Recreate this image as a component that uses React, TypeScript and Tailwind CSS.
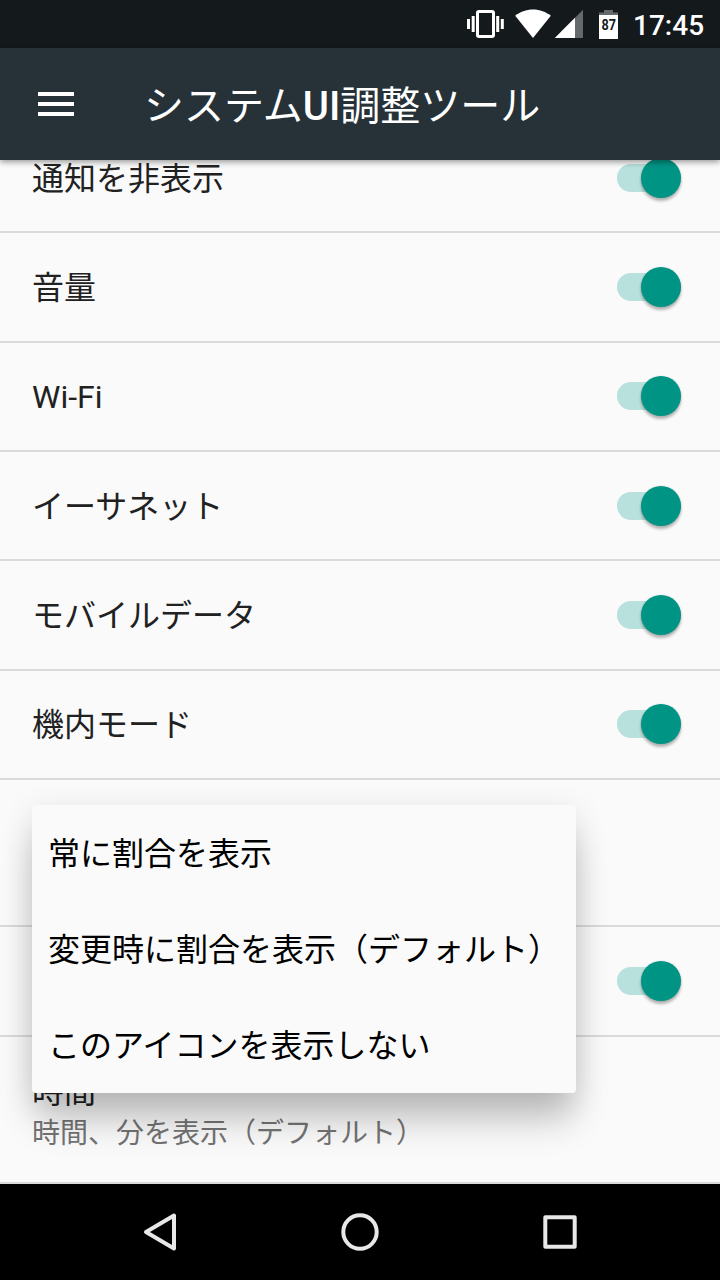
const jp = "font-[Roboto,'Noto_Sans_CJK_JP',sans-serif]";

function Toggle() {
  return (
    <div className="mr-[39px] grid h-10 w-16 shrink-0 items-center">
      <div className="col-start-1 row-start-1 h-7 w-16 rounded-full bg-[#b8e0dc]" />
      <div className="z-[1] col-start-1 row-start-1 h-10 w-10 justify-self-end rounded-full bg-[#009485] shadow-[0_3px_3px_rgba(0,0,0,0.28),0_0_2px_rgba(0,0,0,0.15)]" />
    </div>
  );
}

function SwitchRow({ label }: { label: string }) {
  return (
    <div className="flex h-[109.333px] shrink-0 items-center justify-between border-b-2 border-[#dadada] pl-8">
      <span className="pt-[2px] text-[32px] leading-[44px] text-[#212121]">{label}</span>
      <Toggle />
    </div>
  );
}

const labels = ["通知を非表示", "音量", "Wi-Fi", "イーサネット", "モバイルデータ", "機内モード"];
const options = ["常に割合を表示", "変更時に割合を表示（デフォルト）", "このアイコンを表示しない"];

function StatusBar() {
  return (
    <div className="flex h-12 shrink-0 items-center justify-end bg-[#14191c] pr-4">
      <svg width="162" height="48" viewBox="460 0 162 48" fill="#fff">
        <rect x="477.5" y="11.5" width="16" height="25" rx="1.5" fill="none" stroke="#fff" strokeWidth="3" />
        <rect x="467" y="19" width="3" height="10" />
        <rect x="471.7" y="16" width="3" height="16" />
        <rect x="496.2" y="16" width="3" height="16" />
        <rect x="500.8" y="19" width="3" height="10" />
        <path d="M533 38 515.2 15.8C520 12 526.200 9.600 533 9.600S546 12 550.800 15.800Z" />
        <path d="M583 9.800V38H554.800Z" fillOpacity="0.35" />
        <path d="M575 17.800V38H554.800Z" />
        <path d="M599 15V12.500H604V10H613V12.500H618V15Z" fillOpacity="0.35" />
        <rect x="599" y="15" width="19" height="24" />
        <text x="601.500" y="30" textLength="14.500" lengthAdjust="spacingAndGlyphs" fill="#14191c" className="font-['Roboto'] text-[15.5px] font-bold">87</text>
      </svg>
      <span className="ml-[11px] w-[71px] pt-[3px] font-['Roboto'] text-[28px] leading-[45px] font-medium whitespace-nowrap text-white">17:45</span>
    </div>
  );
}

export default function App() {
  return (
    <div className={"relative flex h-[1280px] w-[720px] flex-col overflow-hidden bg-[#fafafa] " + jp} lang="ja">
      <StatusBar />
      <header className="relative z-10 flex h-28 shrink-0 items-center bg-[#263238] pl-[38px] text-white shadow-[0_2px_6px_rgba(0,0,0,0.4)]">
        <div className="flex w-9 flex-col gap-1.5">
          <div className="h-1 bg-white" />
          <div className="h-1 bg-white" />
          <div className="h-1 bg-white" />
        </div>
        <h1 className="ml-[70px] pt-1.5 text-[40px] leading-[56px] whitespace-nowrap">
          システム<span className="font-medium">UI</span>調整ツール
        </h1>
      </header>

      <main className="flex min-h-0 flex-1 flex-col justify-end overflow-hidden">
        {labels.map((l) => <SwitchRow key={l} label={l} />)}
        <div className="h-[147.333px] shrink-0 border-b-2 border-[#dadada]" />
        <SwitchRow label="" />
        <div className="flex h-[147.333px] shrink-0 flex-col justify-center border-b-2 border-[#dadada] pl-8">
          <span className="text-[32px] leading-[38px] text-[#212121]">時間</span>
          <span className="-mb-[6px] pt-[6px] text-[28px] leading-[34px] text-[#737373]">時間、分を表示（デフォルト）</span>
        </div>
      </main>

      <nav className="flex h-24 shrink-0 items-center justify-center gap-[140px] bg-black">
        <svg width="60" height="60" fill="none" stroke="#e8e8e8" strokeWidth="4" strokeLinejoin="round">
          <path d="M16 30 44 13.500V46.500Z" />
        </svg>
        <svg width="60" height="60" fill="none" stroke="#e8e8e8" strokeWidth="4">
          <circle cx="30" cy="30" r="16.700" />
        </svg>
        <svg width="60" height="60" fill="none" stroke="#e8e8e8" strokeWidth="4" strokeLinejoin="round">
          <rect x="15.300" y="15.300" width="29.400" height="29.400" />
        </svg>
      </nav>

      <ul className="absolute top-[805px] left-8 z-20 h-[288px] w-[544px] rounded-[4px] bg-[#fafafa] text-[32px] text-black shadow-[0_32px_34px_-4px_rgba(0,0,0,0.2),0_8px_32px_rgba(0,0,0,0.12)]">
        {options.map((o) => <li key={o} className="flex h-24 items-center pt-0.5 pl-4 leading-[44px] whitespace-nowrap">{o}</li>)}
      </ul>
    </div>
  );
}
